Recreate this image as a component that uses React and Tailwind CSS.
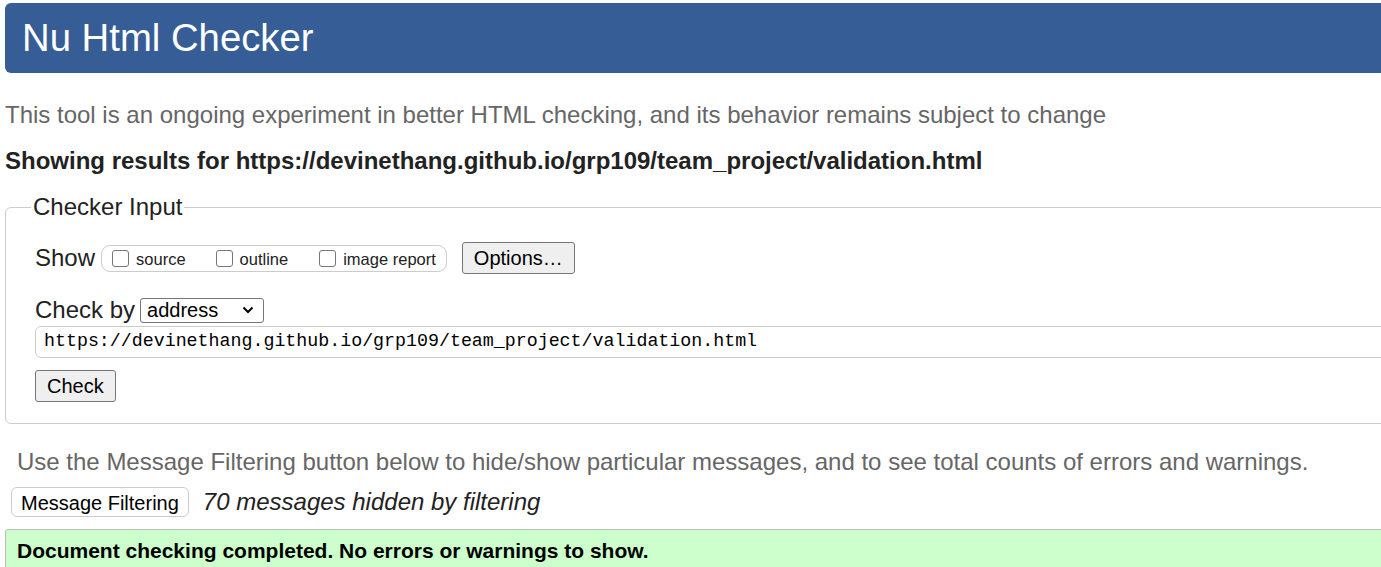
export default function App() {
  const url = "https://devinethang.github.io/grp109/team_project/validation.html";
  return (
    <div className="w-full h-[567px] overflow-hidden bg-white font-['Liberation_Sans',Arial,sans-serif] text-[#222]">
      <div className="w-[1420px] pl-[5px]">
        <header className="mt-[3px] h-[70px] rounded-[6px] bg-[#365d95] pl-[17px] flex items-center">
          <h1 className="text-[38.3px] leading-none text-white">Nu Html Checker</h1>
        </header>

        <p className="mt-[28px] text-[24px] leading-[28px] text-[#666]">
          This tool is an ongoing experiment in better HTML checking, and its behavior remains subject to change
        </p>
        <p className="mt-[18px] text-[24px] leading-[28px] font-bold text-[#222]">
          Showing results for {url}
        </p>

        <fieldset className="mt-[18px] border border-[#ccc] rounded-[6px] pl-[29px] pt-[6px] pb-[21px] mr-[-1px]">
          <legend className="px-[2px] ml-[-4px] text-[24px] leading-[28px] text-[#222]">Checker Input</legend>

          <div className="flex items-center mt-[14px] h-[34px]">
            <span className="text-[24px] mr-[6px]">Show</span>
            <div className="flex items-center h-[27px] border border-[#ccc] rounded-[9px] pl-[10px] pr-[10px]">
              <label className="flex items-center text-[16.5px] mr-[30px]">
                <Box />
                <span className="ml-[7px] mt-[2px]">source</span>
              </label>
              <label className="flex items-center text-[16.5px] mr-[31px]">
                <Box />
                <span className="ml-[7px] mt-[2px]">outline</span>
              </label>
              <label className="flex items-center text-[16.5px]">
                <Box />
                <span className="ml-[7px] mt-[2px]">image report</span>
              </label>
            </div>
            <button className="ml-[15px] h-[32px] px-[11px] bg-[#efefef] border border-[#767676] rounded-[3px] text-[20px] text-black">
              Options…
            </button>
          </div>

          <div className="flex items-center mt-[21px] h-[28px]">
            <span className="text-[24px]">Check by</span>
            <div className="ml-[5px] w-[124px] h-[25px] border border-[#767676] rounded-[3px] flex items-center pl-[6px] pr-[9px] text-[20px] text-black">
              <span className="flex-1">address</span>
              <svg width="12" height="8" viewBox="0 0 12 8" fill="none" stroke="#000" strokeWidth="2">
                <path d="M1.5 1.5 L6 6 L10.5 1.5" />
              </svg>
            </div>
          </div>

          <div className="mt-[2px] h-[32px] border border-[#ccc] rounded-[6px] flex items-center pl-[8px] font-['Liberation_Mono',monospace] text-[18.3px] text-black">
            {url}
          </div>

          <button className="mt-[12px] h-[32px] px-[11px] bg-[#efefef] border border-[#767676] rounded-[3px] text-[20px] text-black">
            Check
          </button>
        </fieldset>

        <p className="mt-[24px] ml-[12px] text-[24px] leading-[28px] text-[#666]">
          Use the Message Filtering button below to hide/show particular messages, and to see total counts of errors and warnings.
        </p>
        <div className="mt-[11px] h-[30px] flex items-center ml-[6px]">
          <button className="h-[30px] px-[9px] bg-white border border-[#ccc] rounded-[6px] text-[20px] text-black">
            Message Filtering
          </button>
          <span className="ml-[14px] text-[24px] leading-[28px] italic text-[#222]">70 messages hidden by filtering</span>
        </div>

        <div className="mt-[12px] h-[60px] bg-[#ccffcc] border border-[#bbb] rounded-t-[3px] pl-[11px] pt-[9px]">
          <p className="text-[21px] leading-[24px] font-bold text-black">Document checking completed. No errors or warnings to show.</p>
        </div>
      </div>
    </div>
  );
}

function Box() {
  return <span className="inline-block w-[17px] h-[17px] border border-[#767676] rounded-[3px] bg-white" />;
}
